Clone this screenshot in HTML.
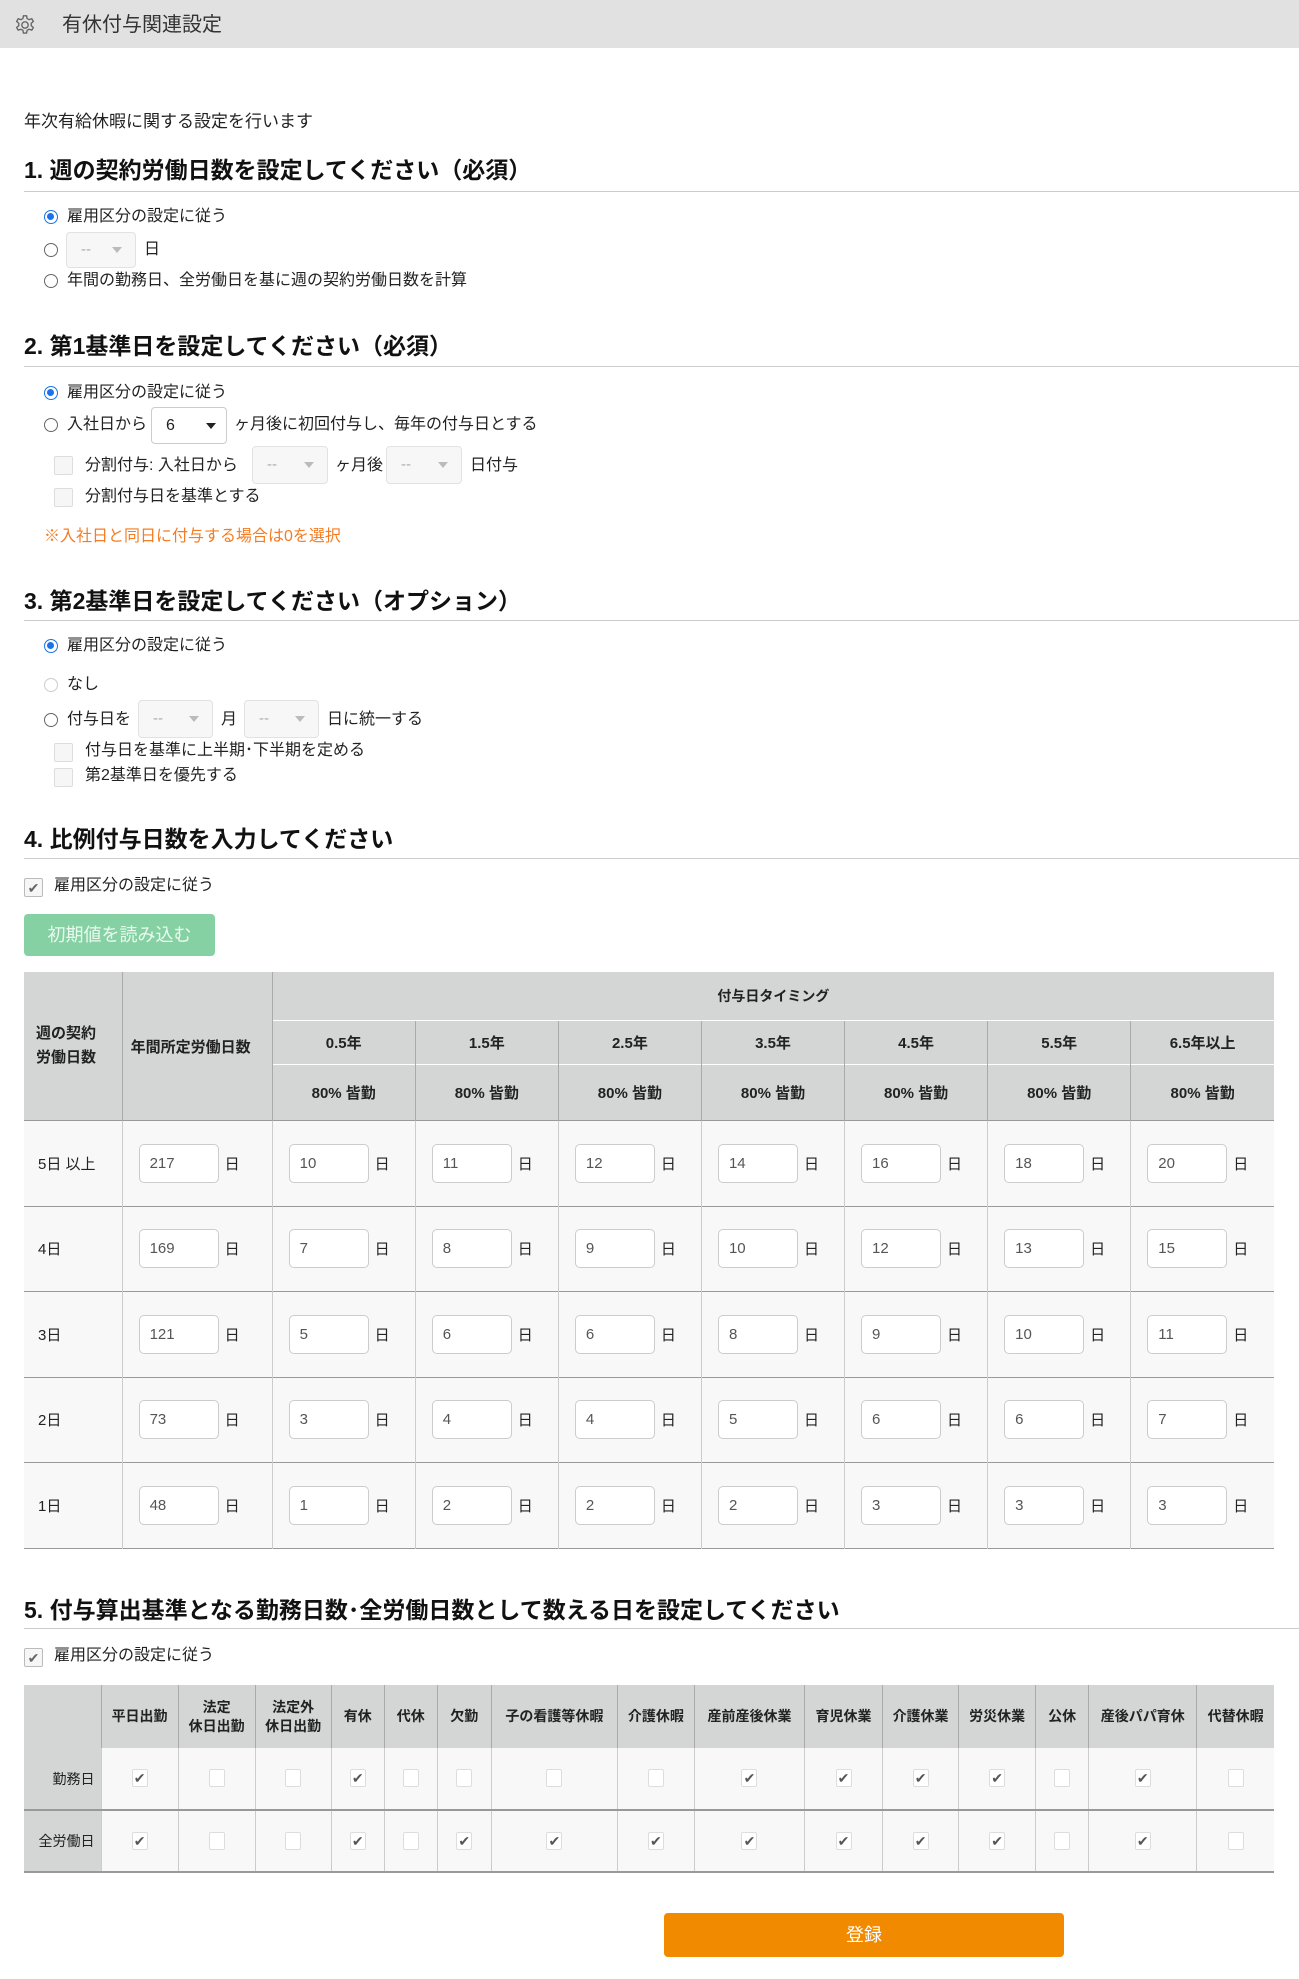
<!DOCTYPE html>
<html><head><meta charset="utf-8"><style>
*{box-sizing:border-box;margin:0;padding:0}
body{width:1299px;height:1979px;background:#fff;font-family:"Liberation Sans","Noto Sans CJK JP",sans-serif;color:#222;position:relative;overflow:hidden}
.a{position:absolute;white-space:nowrap}
.l{font-size:16px;line-height:24px}
.h{font-size:23px;font-weight:bold;line-height:30px;color:#111}
.hr{position:absolute;left:24px;right:0;height:1px;background:#ccc}
.rad{position:absolute;width:14px;height:14px;border-radius:50%;border:1.5px solid #666;background:#fff}
.rad.on{border:1.5px solid #1a73e8}
.rad.on:after{content:"";position:absolute;left:2px;top:2px;width:7px;height:7px;border-radius:50%;background:#1a73e8}
.rad.dis{border-color:#ccc}
.cb{position:absolute;width:19px;height:19px;border:1px solid #ddd;border-radius:2px;background:#f6f6f6;font-size:14px;line-height:19px;text-align:center;color:#666}
.sel{position:absolute;border:1px solid #e2e2e2;border-radius:4px;background:#f7f7f7;color:#aaa;font-size:15px;padding-left:14px}
.sel:after{content:"";position:absolute;right:13px;top:50%;margin-top:-3px;border-left:5px solid transparent;border-right:5px solid transparent;border-top:6px solid #bbb}
.sel.dk:after{border-top-color:#222;right:10px}
table{border-collapse:collapse;position:absolute;table-layout:fixed}
th{background:#d4d6d6;font-size:15px;font-weight:bold;color:#222}
.t4 td{background:#f8f8f8;border-left:1px solid #ccc;border-top:1px solid #999;font-size:15px;height:85.5px;padding-left:16px}
.t4 th{border-left:1px solid #aaa;border-top:1px solid #fff}
.inp{display:inline-block;width:80px;height:39px;border:1px solid #ccc;border-radius:5px;background:#fff;font-size:15px;line-height:37px;padding-left:10px;color:#555;vertical-align:middle}
.d{display:inline-block;margin-left:6px;vertical-align:middle;font-size:15px}
.t5 th{font-size:14px;border-left:1px solid #aaa;line-height:19px}
.t5 td{background:#f8f8f8;border-left:1px solid #ccc;text-align:center;height:62px}
.t5 .rl{background:#d4d6d6;font-size:14px;text-align:right;padding-right:6px;border-left:none}
.c{display:inline-block;width:16px;height:18px;border:1px solid #ddd;border-radius:2px;background:#fff;font-size:14px;line-height:17px;color:#555;vertical-align:middle}
</style></head><body>
<div class="a" style="left:0;top:0;width:1299px;height:48px;background:#e1e1e1"></div>
<svg class="a" style="left:14px;top:14px" width="22" height="22" viewBox="0 0 24 24" fill="none" stroke="#666" stroke-width="1.5"><circle cx="12" cy="12" r="3.5"/><path d="M10.3 2h3.4l.6 3 2.2 1.2 2.9-1 1.7 2.9-2.3 2v2.6l2.3 2-1.7 2.9-2.9-1-2.2 1.2-.6 3h-3.4l-.6-3-2.2-1.2-2.9 1-1.7-2.9 2.3-2v-2.6l-2.3-2 1.7-2.9 2.9 1 2.2-1.2z"/></svg>
<div class="a" style="left:62px;top:11px;font-size:20px;line-height:28px;color:#333">有休付与関連設定</div>

<div class="a l" style="left:24px;top:110px;font-size:17px">年次有給休暇に関する設定を行います</div>

<div class="a h" style="left:24px;top:155px">1. 週の契約労働日数を設定してください（必須）</div>
<div class="hr" style="top:191px"></div>
<div class="rad on" style="left:44px;top:210px"></div><div class="a l" style="left:67px;top:205px">雇用区分の設定に従う</div>
<div class="rad" style="left:44px;top:243px"></div><div class="sel" style="left:66px;top:232px;width:70px;height:36px;line-height:34px">--</div><div class="a l" style="left:144px;top:238px">日</div>
<div class="rad" style="left:44px;top:274px"></div><div class="a l" style="left:67px;top:269px">年間の勤務日、全労働日を基に週の契約労働日数を計算</div>

<div class="a h" style="left:24px;top:331px">2. 第1基準日を設定してください（必須）</div>
<div class="hr" style="top:366px"></div>
<div class="rad on" style="left:44px;top:386px"></div><div class="a l" style="left:67px;top:381px">雇用区分の設定に従う</div>
<div class="rad" style="left:44px;top:418px"></div><div class="a l" style="left:67px;top:413px">入社日から</div>
<div class="sel dk" style="left:151px;top:407px;width:76px;height:37px;line-height:35px;background:#fff;border-color:#ccc;color:#222;font-size:16px">6</div>
<div class="a l" style="left:234px;top:413px">ヶ月後に初回付与し、毎年の付与日とする</div>
<div class="cb" style="left:54px;top:456px"></div><div class="a l" style="left:85px;top:454px">分割付与: 入社日から</div>
<div class="sel" style="left:252px;top:446px;width:76px;height:38px;line-height:36px">--</div>
<div class="a l" style="left:335px;top:454px">ヶ月後</div>
<div class="sel" style="left:386px;top:446px;width:76px;height:38px;line-height:36px">--</div>
<div class="a l" style="left:470px;top:454px">日付与</div>
<div class="cb" style="left:54px;top:488px"></div><div class="a l" style="left:85px;top:485px">分割付与日を基準とする</div>
<div class="a l" style="left:44px;top:525px;color:#f57c22">※入社日と同日に付与する場合は0を選択</div>

<div class="a h" style="left:24px;top:586px">3. 第2基準日を設定してください（オプション）</div>
<div class="hr" style="top:620px"></div>
<div class="rad on" style="left:44px;top:639px"></div><div class="a l" style="left:67px;top:634px">雇用区分の設定に従う</div>
<div class="rad dis" style="left:44px;top:678px"></div><div class="a l" style="left:67px;top:673px">なし</div>
<div class="rad" style="left:44px;top:713px"></div><div class="a l" style="left:67px;top:708px">付与日を</div>
<div class="sel" style="left:138px;top:700px;width:75px;height:38px;line-height:36px">--</div>
<div class="a l" style="left:221px;top:708px">月</div>
<div class="sel" style="left:244px;top:700px;width:75px;height:38px;line-height:36px">--</div>
<div class="a l" style="left:327px;top:708px">日に統一する</div>
<div class="cb" style="left:54px;top:743px"></div><div class="a l" style="left:85px;top:739px">付与日を基準に上半期･下半期を定める</div>
<div class="cb" style="left:54px;top:768px"></div><div class="a l" style="left:85px;top:764px">第2基準日を優先する</div>

<div class="a h" style="left:24px;top:824px">4. 比例付与日数を入力してください</div>
<div class="hr" style="top:858px"></div>
<div class="cb" style="left:24px;top:878px;background:#f6f6f6;border-color:#bbb">✔</div><div class="a l" style="left:54px;top:874px">雇用区分の設定に従う</div>
<div class="a" style="left:24px;top:914px;width:191px;height:42px;background:#86d1a3;border-radius:4px;color:#eafaf0;font-size:18px;line-height:42px;text-align:center">初期値を読み込む</div>

<table class="t4" style="left:24px;top:971px;width:1250px">
<colgroup><col style="width:98px"><col style="width:150px"><col span="7" style="width:143px"></colgroup>
<tr style="height:49px"><th rowspan="3" style="border-left:none;text-align:left;padding-left:12px;line-height:24px">週の契約<br>労働日数</th><th rowspan="3" style="text-align:left;padding-left:8px">年間所定労働日数</th><th colspan="7" style="text-align:center;font-size:14px">付与日タイミング</th></tr>
<tr style="height:44px"><th>0.5年</th><th>1.5年</th><th>2.5年</th><th>3.5年</th><th>4.5年</th><th>5.5年</th><th>6.5年以上</th></tr>
<tr style="height:56px"><th>80% 皆勤</th><th>80% 皆勤</th><th>80% 皆勤</th><th>80% 皆勤</th><th>80% 皆勤</th><th>80% 皆勤</th><th>80% 皆勤</th></tr>
<tr><td style="border-left:none;padding-left:14px">5日 以上</td><td><span class="inp">217</span><span class="d">日</span></td><td><span class="inp">10</span><span class="d">日</span></td><td><span class="inp">11</span><span class="d">日</span></td><td><span class="inp">12</span><span class="d">日</span></td><td><span class="inp">14</span><span class="d">日</span></td><td><span class="inp">16</span><span class="d">日</span></td><td><span class="inp">18</span><span class="d">日</span></td><td><span class="inp">20</span><span class="d">日</span></td></tr>
<tr><td style="border-left:none;padding-left:14px">4日</td><td><span class="inp">169</span><span class="d">日</span></td><td><span class="inp">7</span><span class="d">日</span></td><td><span class="inp">8</span><span class="d">日</span></td><td><span class="inp">9</span><span class="d">日</span></td><td><span class="inp">10</span><span class="d">日</span></td><td><span class="inp">12</span><span class="d">日</span></td><td><span class="inp">13</span><span class="d">日</span></td><td><span class="inp">15</span><span class="d">日</span></td></tr>
<tr><td style="border-left:none;padding-left:14px">3日</td><td><span class="inp">121</span><span class="d">日</span></td><td><span class="inp">5</span><span class="d">日</span></td><td><span class="inp">6</span><span class="d">日</span></td><td><span class="inp">6</span><span class="d">日</span></td><td><span class="inp">8</span><span class="d">日</span></td><td><span class="inp">9</span><span class="d">日</span></td><td><span class="inp">10</span><span class="d">日</span></td><td><span class="inp">11</span><span class="d">日</span></td></tr>
<tr><td style="border-left:none;padding-left:14px">2日</td><td><span class="inp">73</span><span class="d">日</span></td><td><span class="inp">3</span><span class="d">日</span></td><td><span class="inp">4</span><span class="d">日</span></td><td><span class="inp">4</span><span class="d">日</span></td><td><span class="inp">5</span><span class="d">日</span></td><td><span class="inp">6</span><span class="d">日</span></td><td><span class="inp">6</span><span class="d">日</span></td><td><span class="inp">7</span><span class="d">日</span></td></tr>
<tr style="border-bottom:1px solid #999"><td style="border-left:none;padding-left:14px">1日</td><td><span class="inp">48</span><span class="d">日</span></td><td><span class="inp">1</span><span class="d">日</span></td><td><span class="inp">2</span><span class="d">日</span></td><td><span class="inp">2</span><span class="d">日</span></td><td><span class="inp">2</span><span class="d">日</span></td><td><span class="inp">3</span><span class="d">日</span></td><td><span class="inp">3</span><span class="d">日</span></td><td><span class="inp">3</span><span class="d">日</span></td></tr>
</table>

<div class="a h" style="left:24px;top:1595px">5. 付与算出基準となる勤務日数･全労働日数として数える日を設定してください</div>
<div class="hr" style="top:1628px"></div>
<div class="cb" style="left:24px;top:1648px;background:#f6f6f6;border-color:#bbb">✔</div><div class="a l" style="left:54px;top:1644px">雇用区分の設定に従う</div>

<table class="t5" style="left:24px;top:1685px;width:1250px">
<colgroup><col style="width:77px"><col style="width:77px"><col style="width:77px"><col style="width:76px"><col style="width:53px"><col style="width:53px"><col style="width:54px"><col style="width:126px"><col style="width:77px"><col style="width:110px"><col style="width:78px"><col style="width:76px"><col style="width:77px"><col style="width:53px"><col style="width:108px"><col style="width:77px"></colgroup>
<tr style="height:63px"><th style="border-left:none"></th><th>平日出勤</th><th>法定<br>休日出勤</th><th>法定外<br>休日出勤</th><th>有休</th><th>代休</th><th>欠勤</th><th>子の看護等休暇</th><th>介護休暇</th><th>産前産後休業</th><th>育児休業</th><th>介護休業</th><th>労災休業</th><th>公休</th><th>産後パパ育休</th><th>代替休暇</th></tr>
<tr style="border-bottom:2px solid #999"><td class="rl">勤務日</td><td><span class="c">✔</span></td><td><span class="c"></span></td><td><span class="c"></span></td><td><span class="c">✔</span></td><td><span class="c"></span></td><td><span class="c"></span></td><td><span class="c"></span></td><td><span class="c"></span></td><td><span class="c">✔</span></td><td><span class="c">✔</span></td><td><span class="c">✔</span></td><td><span class="c">✔</span></td><td><span class="c"></span></td><td><span class="c">✔</span></td><td><span class="c"></span></td></tr>
<tr style="border-bottom:2px solid #999"><td class="rl">全労働日</td><td><span class="c">✔</span></td><td><span class="c"></span></td><td><span class="c"></span></td><td><span class="c">✔</span></td><td><span class="c"></span></td><td><span class="c">✔</span></td><td><span class="c">✔</span></td><td><span class="c">✔</span></td><td><span class="c">✔</span></td><td><span class="c">✔</span></td><td><span class="c">✔</span></td><td><span class="c">✔</span></td><td><span class="c"></span></td><td><span class="c">✔</span></td><td><span class="c"></span></td></tr>
</table>

<div class="a" style="left:664px;top:1913px;width:400px;height:44px;background:#f28a00;border-radius:4px;color:#fff;font-size:18px;line-height:44px;text-align:center">登録</div>
</body></html>
